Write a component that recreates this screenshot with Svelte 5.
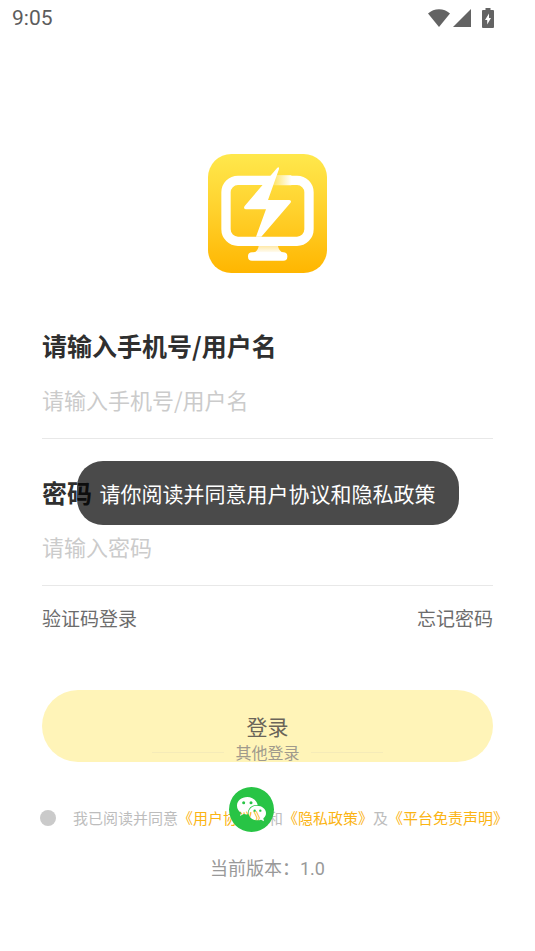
<script>
	let account = '';
	let password = '';
	let agreed = false;
	let toast = '请你阅读并同意用户协议和隐私政策';

	function handleLogin() {
		if (!agreed) {
			toast = '请你阅读并同意用户协议和隐私政策';
		}
	}
</script>

<header class="status">
	<span>9:05</span>
	<div class="status-icons">
		<svg width="22" height="18" viewBox="0 0 22 18">
			<path d="M11 18L0 4.5C6-1.3 16-1.3 22 4.5z" />
		</svg>
		<svg width="18" height="18" viewBox="0 0 18 18">
			<path d="M18 0v18H0z" />
		</svg>
		<svg class="battery" width="12" height="20" viewBox="0 0 12 20">
			<path
				fill-rule="evenodd"
				d="M3.500 0h5v2H11a1 1 0 0 1 1 1v16a1 1 0 0 1-1 1H1a1 1 0 0 1-1-1V3a1 1 0 0 1 1-1h2.500zM7 5.500L3 12h2.200v4.500L9 10H7z"
			/>
		</svg>
	</div>
</header>

<main>
	<svg class="logo" viewBox="0 0 357 357">
		<defs>
			<linearGradient id="bg" x1="0" y1="0" x2="0" y2="1">
				<stop offset="0" stop-color="#ffe84c" />
				<stop offset="0.5" stop-color="#ffd02b" />
				<stop offset="1" stop-color="#ffb600" />
			</linearGradient>
			<linearGradient id="fade" x1="0" y1="0" x2="1" y2="0">
				<stop offset="0" stop-color="#ffe04a" />
				<stop offset="1" stop-color="#fff" />
			</linearGradient>
			<linearGradient id="neck" x1="0" y1="0" x2="0" y2="1">
				<stop offset="0" stop-color="#ffe9a8" />
				<stop offset="1" stop-color="#fff" />
			</linearGradient>
		</defs>
		<rect width="357" height="357" rx="70" fill="url(#bg)" />
		<rect x="54" y="79" width="249" height="183" rx="36" fill="none" stroke="#fff" stroke-width="28" />
		<path d="M200 64h50v30h-62z" fill="url(#fade)" />
		<path d="M152 276h58q2 16 18 22h-94q16-6 18-22z" fill="url(#neck)" />
		<rect x="120" y="295" width="118" height="25" rx="12" fill="#fff" />
		<path
			d="M208 41Q214 37 213 45L180 138H244Q252 140 247 147L160 248H144L174 166H113Q105 164 110 156z"
			fill="#fff"
		/>
	</svg>

	<form on:submit|preventDefault={handleLogin}>
		<div class="field">
			<label for="account">请输入手机号/用户名</label>
			<input id="account" type="text" bind:value={account} placeholder="请输入手机号/用户名" />
		</div>
		<div class="field">
			<label for="password">密码</label>
			<input id="password" type="password" bind:value={password} placeholder="请输入密码" />
		</div>

		<div class="links">
			<a href="#code">验证码登录</a>
			<a href="#forgot">忘记密码</a>
		</div>

		<div class="bottom">
			<button class="login" type="submit">登录</button>

			<div class="agreement">
				<input id="agree" type="checkbox" bind:checked={agreed} aria-label="我已阅读并同意" />
				<p>
					<label for="agree">我已阅读并同意</label><a href="#user">《用户协议》</a>和<a href="#privacy">《隐私政策》</a>及<a href="#disclaimer">《平台免责声明》</a>
				</p>
			</div>

			<!-- floats over the login button and the agreement line -->
			<div class="others">
				<div class="others-title">其他登录</div>
				<button class="wechat" type="button" aria-label="微信登录">
					<svg width="45" height="45" viewBox="0 0 135 135">
						<path
							fill="#28c445"
							fill-rule="evenodd"
							d="M67.500 0a67.500 67.500 0 1 1 0 135a67.500 67.500 0 1 1 0-135zM55 30C37 30 24 41 24 56C24 65 29 72 36 77L33 87L44 81C48 82 53 83 58 82C54 66 67 53 86 54C83 40 70 30 55 30zM84 56C69 56 59 66 59 78C59 91 71 100 85 100C89 100 93 99 96 98L105 103L103 94C108 90 111 85 111 78C111 66 99 56 84 56z"
						/>
						<g fill="#28c445">
							<circle cx="44" cy="47" r="4.500" />
							<circle cx="66" cy="47" r="4.500" />
							<circle cx="77" cy="71" r="3.500" />
							<circle cx="94" cy="71" r="3.500" />
						</g>
					</svg>
				</button>
			</div>
		</div>
	</form>

	<p class="version">当前版本：1.0</p>
</main>

{#if toast}
	<div class="toast" role="status">{toast}</div>
{/if}

<style>
	:global(body) {
		background: #fff;
		font-family: 'Noto Sans CJK SC', sans-serif;
	}

	.status {
		display: flex;
		justify-content: space-between;
		align-items: center;
		height: 36px;
		padding: 0 41px 0 12px;
		font-family: Roboto, sans-serif;
		font-size: 21px;
		color: #5c5c5c;
	}

	.status-icons {
		display: flex;
		align-items: center;
		gap: 3px;
		fill: #636363;
	}

	.battery {
		margin-left: 8px;
	}

	.logo {
		display: block;
		width: 119px;
		height: 119px;
		margin: 118px auto 57px;
	}

	.field {
		display: flex;
		flex-direction: column;
		margin: 0 42px 38px;
		border-bottom: 1px solid #e8e8e8;
	}

	.field label {
		font-size: 25px;
		line-height: 30px;
		font-weight: 700;
		color: #2f2f2f;
	}

	.field input {
		height: 36px;
		margin: 21px 0;
		padding: 0;
		border: none;
		outline: none;
		background: none;
		font-family: inherit;
		font-size: 22px;
		color: #333;
	}

	.field input::placeholder {
		color: #cbcbcb;
		opacity: 1;
	}

	.links {
		display: flex;
		justify-content: space-between;
		margin: -20px 42px 58px;
		font-size: 19px;
		line-height: 28px;
	}

	.links a {
		color: #6c6c6c;
		text-decoration: none;
	}

	.bottom {
		position: relative;
	}

	.login {
		display: block;
		width: calc(100% - 84px);
		height: 72px;
		margin: 0 42px;
		border: none;
		border-radius: 36px;
		background: #fff4b8;
		font-family: Roboto, 'Noto Sans CJK SC', sans-serif;
		font-size: 21px;
		color: #6a6459;
		cursor: pointer;
	}

	.agreement {
		display: flex;
		align-items: center;
		gap: 17px;
		margin-top: 44px;
		padding: 0 24px 0 40px;
		font-size: 15px;
		line-height: 24px;
		color: #bdbdbd;
	}

	.agreement input {
		flex: none;
		appearance: none;
		width: 16px;
		height: 16px;
		margin: 0;
		border-radius: 50%;
		background: #cacaca;
	}

	.agreement input:checked {
		background: #fdb813;
	}

	.agreement p {
		margin: 0;
	}

	.agreement a {
		color: #fbb413;
		text-decoration: none;
	}

	.others {
		position: absolute;
		top: 50px;
		left: 0;
		right: 0;
		display: flex;
		flex-direction: column;
		align-items: center;
		pointer-events: none;
	}

	.others-title {
		display: flex;
		align-items: center;
		gap: 11px;
		font-size: 16px;
		line-height: 24px;
		color: #a09a8c;
	}

	.others-title::before,
	.others-title::after {
		content: '';
		width: 72px;
		height: 1px;
		background: #f5ebb8;
	}

	.wechat {
		margin: 23px 32px 0 0;
		padding: 0;
		border: none;
		background: none;
		cursor: pointer;
		pointer-events: auto;
	}

	.wechat svg {
		display: block;
	}

	.version {
		margin: 24px 0;
		font-family: Roboto, 'Noto Sans CJK SC', sans-serif;
		font-size: 18px;
		line-height: 30px;
		text-align: center;
		color: #999;
	}

	.toast {
		position: absolute;
		top: 461px;
		left: 50%;
		transform: translateX(-50%);
		padding: 16px 23px;
		border-radius: 26px;
		background: rgba(0, 0, 0, 0.71);
		font-size: 21px;
		line-height: 32px;
		white-space: nowrap;
		color: #fff;
	}
</style>
